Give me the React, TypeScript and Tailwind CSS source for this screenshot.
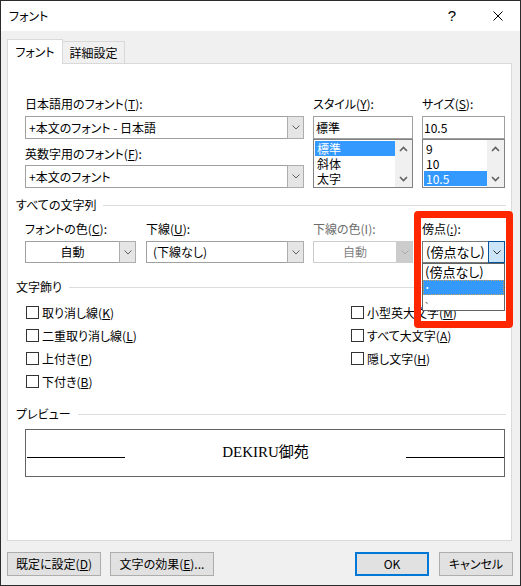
import React from "react";

const Chev = ({ c = "#606060" }: { c?: string }) => (
  <svg width="8" height="5" viewBox="0 0 8 5" className="block">
    <path d="M0.5 0.5L4 4L7.5 0.5" fill="none" stroke={c} strokeWidth="1" />
  </svg>
);

const Arrow = ({ up }: { up?: boolean }) => (
  <svg width="9" height="6" viewBox="0 0 9 6" className="block">
    <path
      d={up ? "M1 5L4.5 1.5L8 5" : "M1 1L4.5 4.5L8 1"}
      fill="none"
      stroke="#606060"
      strokeWidth="1.6"
    />
  </svg>
);

function Label({ children, className = "" }: { children: React.ReactNode; className?: string }) {
  return <div className={"h-[16px] leading-[16px] whitespace-nowrap " + className}>{children}</div>;
}

function Combo({
  children,
  className = "",
  center,
  btnClass = "border-[#adadad] bg-[#e5e5e5]",
  chev = "#606060",
  textClass = "",
}: {
  children: React.ReactNode;
  className?: string;
  center?: boolean;
  btnClass?: string;
  chev?: string;
  textClass?: string;
}) {
  return (
    <div className={"flex bg-white border " + className}>
      <div
        className={
          "flex-1 flex items-center whitespace-nowrap overflow-hidden " +
          (center ? "justify-center " : "pl-[3px] ") +
          textClass
        }
      >
        {children}
      </div>
      <div className={"w-[17px] -my-px -mr-px self-stretch border flex items-center justify-center " + btnClass}>
        <Chev c={chev} />
      </div>
    </div>
  );
}

function ListBox({ items, selected }: { items: string[]; selected: number }) {
  return (
    <div className="h-[49px] border border-[#828282] bg-white flex">
      <div className="flex-1 pl-[1px] pt-[1px]">
        {items.map((t, i) => (
          <div
            key={i}
            className={
              "h-[15px] leading-[15px] pl-[2px] whitespace-nowrap " +
              (i === selected ? "bg-[#3399ff] text-white" : "")
            }
          >
            {t}
          </div>
        ))}
      </div>
      <div className="w-[17px] bg-[#f0f0f0] flex flex-col justify-between">
        <div className="h-[17px] flex items-center justify-center">
          <Arrow up />
        </div>
        <div className="h-[17px] flex items-center justify-center">
          <Arrow />
        </div>
      </div>
    </div>
  );
}

function Section({ children, className = "" }: { children: React.ReactNode; className?: string }) {
  return (
    <div className={"h-[16px] flex items-center mr-[5px] " + className}>
      <span className="leading-[16px] whitespace-nowrap">{children}</span>
      <div className="flex-1 h-px bg-[#dcdcdc] ml-[7px]" />
    </div>
  );
}

function Check({ children }: { children: React.ReactNode }) {
  return (
    <div className="h-[23px] flex items-center">
      <div className="w-[13px] h-[13px] border border-[#333333] bg-white shrink-0" />
      <span className="ml-[3px] leading-[16px] whitespace-nowrap">{children}</span>
    </div>
  );
}

function Btn({ children, className = "" }: { children: React.ReactNode; className?: string }) {
  return (
    <div
      className={
        "h-[24px] bg-[#e1e1e1] flex items-center justify-center whitespace-nowrap " + className
      }
    >
      {children}
    </div>
  );
}

export default function App() {
  return (
    <div className="w-[521px] h-[586px] border border-[#2b2b2b] bg-[#f0f0f0] flex flex-col text-[12px] text-black font-['Noto_Sans_CJK_JP',sans-serif] [font-feature-settings:'palt'] overflow-hidden">
      {/* title bar */}
      <div className="h-[30px] bg-white flex items-center shrink-0">
        <span className="pl-[8px] leading-[16px]">フォント</span>
        <span className="ml-auto text-[15px] leading-none font-['Liberation_Sans',sans-serif] -mt-[2px]">?</span>
        <svg width="10" height="10" viewBox="0 0 10 10" className="block ml-[37px] mr-[17px]">
          <path d="M0.5 0.5L9.5 9.5M9.5 0.5L0.5 9.5" stroke="#000" strokeWidth="1" />
        </svg>
      </div>

      {/* body */}
      <div className="flex-1 px-[6px] pt-[8px] flex flex-col">
        {/* tabs */}
        <div className="flex items-end h-[24px] relative z-10">
          <div className="w-[56px] h-[25px] -mb-px bg-white border border-b-0 border-[#d9d9d9] flex items-center justify-center leading-[16px]">
            フォント
          </div>
          <div className="w-[62px] h-[22px] bg-[#f0f0f0] border border-b-0 border-l-0 border-[#d9d9d9] flex items-center justify-center leading-[16px]">
            詳細設定
          </div>
        </div>

        {/* panel */}
        <div className="w-[505px] h-[478px] bg-white border border-[#d9d9d9] pl-[8px] pt-[32px] flex flex-col">
          {/* fonts row */}
          <div className="flex ml-[9px]">
            <div className="w-[279px] flex flex-col">
              <Label>
                日本語用のフォント(<u>T</u>):
              </Label>
              <Combo className="mt-[4px] h-[23px] border-[#a0a0a0]">+本文のフォント - 日本語</Combo>
              <Label className="mt-[7px]">
                英数字用のフォント(<u>F</u>):
              </Label>
              <Combo className="mt-[3px] h-[23px] border-[#a0a0a0]">+本文のフォント</Combo>
            </div>
            <div className="w-[100px] ml-[9px] flex flex-col">
              <Label>
                スタイル(<u>Y</u>):
              </Label>
              <div className="mt-[4px] h-[23px] border border-[#a0a0a0] bg-white flex items-center pl-[2px]">
                標準
              </div>
              <ListBox items={["標準", "斜体", "太字"]} selected={0} />
            </div>
            <div className="w-[83px] ml-[9px] flex flex-col">
              <Label>
                サイズ(<u>S</u>):
              </Label>
              <div className="mt-[4px] h-[23px] border border-[#a0a0a0] bg-white flex items-center pl-[1px]">
                10.5
              </div>
              <ListBox items={["9", "10", "10.5"]} selected={2} />
            </div>
          </div>

          <Section className="mt-[9px]">すべての文字列</Section>

          {/* color / underline row */}
          <div className="flex ml-[9px] mt-[8px]">
            <div className="w-[111px] flex flex-col">
              <Label>
                フォントの色(<u>C</u>):
              </Label>
              <Combo className="mt-[4px] h-[22px] border-[#a0a0a0]" center>
                自動
              </Combo>
            </div>
            <div className="w-[158px] ml-[10px] flex flex-col">
              <Label>
                下線(<u>U</u>):
              </Label>
              <Combo className="mt-[4px] h-[22px] border-[#a0a0a0]" textClass="pl-[6px]">
                (下線なし)
              </Combo>
            </div>
            <div className="w-[100px] ml-[9px] flex flex-col">
              <Label className="text-[#6d6d6d]">下線の色(I):</Label>
              <Combo
                className="mt-[4px] h-[22px] border-[#cccccc]"
                center
                btnClass="border-[#cccccc] bg-[#cccccc]"
                chev="#a8a8a8"
                textClass="text-[#838383]"
              >
                自動
              </Combo>
            </div>
            <div className="w-[83px] ml-[9px] flex flex-col relative">
              <Label>
                傍点(<u>:</u>):
              </Label>
              <Combo
                className="mt-[4px] h-[22px] border-[#7a7a7a]"
                btnClass="border-[#005499] bg-[#cce4f7]"
                chev="#333333"
                textClass="pl-[3px] text-[13px]"
              >
                (傍点なし)
              </Combo>
              {/* open dropdown list */}
              <div className="absolute left-0 top-[42px] w-[83px] h-[48px] bg-white border border-[#646464] flex flex-col text-[13px] overflow-hidden">
                <div className="h-[16px] leading-[16px] pl-[2px] whitespace-nowrap">(傍点なし)</div>
                <div className="h-[15px] flex items-center bg-[#3399ff] text-white border border-dotted border-[#c7a063] pl-[1px] text-[9px] leading-[9px]">
                  ・
                </div>
                <div className="h-[15px] pl-[2px] pt-[1px] text-[8px] leading-[8px] text-[#555555]">、</div>
              </div>
              {/* red highlight */}
              <div className="absolute left-[-8px] top-[-10px] w-[99px] h-[117px] border-[7px] border-[#ff2600] rounded-[4px] pointer-events-none" />
            </div>
          </div>

          <Section className="mt-[16px]">文字飾り</Section>

          {/* checkboxes */}
          <div className="flex ml-[10px] mt-[6px]">
            <div className="w-[325px] flex flex-col">
              <Check>
                取り消し線(<u>K</u>)
              </Check>
              <Check>
                二重取り消し線(<u>L</u>)
              </Check>
              <Check>
                上付き(<u>P</u>)
              </Check>
              <Check>
                下付き(<u>B</u>)
              </Check>
            </div>
            <div className="flex flex-col">
              <Check>
                小型英大文字(<u>M</u>)
              </Check>
              <Check>
                すべて大文字(<u>A</u>)
              </Check>
              <Check>
                隠し文字(<u>H</u>)
              </Check>
            </div>
          </div>

          <Section className="mt-[13px]">プレビュー</Section>

          {/* preview */}
          <div className="mt-[7px] ml-[9px] w-[480px] h-[48px] border border-[#646464] flex items-start">
            <div className="mt-[27px] ml-[1px] w-[98px] h-px bg-black" />
            <div className="flex-1 mt-[13px] text-center leading-[18px] text-[15px] font-['Liberation_Serif','Noto_Sans_CJK_JP',serif] [font-feature-settings:normal]">
              DEKIRU御苑
            </div>
            <div className="mt-[27px] w-[98px] h-px bg-black" />
          </div>
        </div>

        {/* buttons */}
        <div className="mt-[11px] w-[506px] flex">
          <Btn className="w-[94px] border border-[#adadad]">
            既定に設定(<u>D</u>)
          </Btn>
          <Btn className="w-[104px] ml-[9px] border border-[#adadad]">
            文字の効果(<u>E</u>)...
          </Btn>
          <Btn className="w-[74px] ml-auto border-2 border-[#0078d7]">OK</Btn>
          <Btn className="w-[74px] ml-[10px] border border-[#adadad]">キャンセル</Btn>
        </div>
      </div>
    </div>
  );
}
